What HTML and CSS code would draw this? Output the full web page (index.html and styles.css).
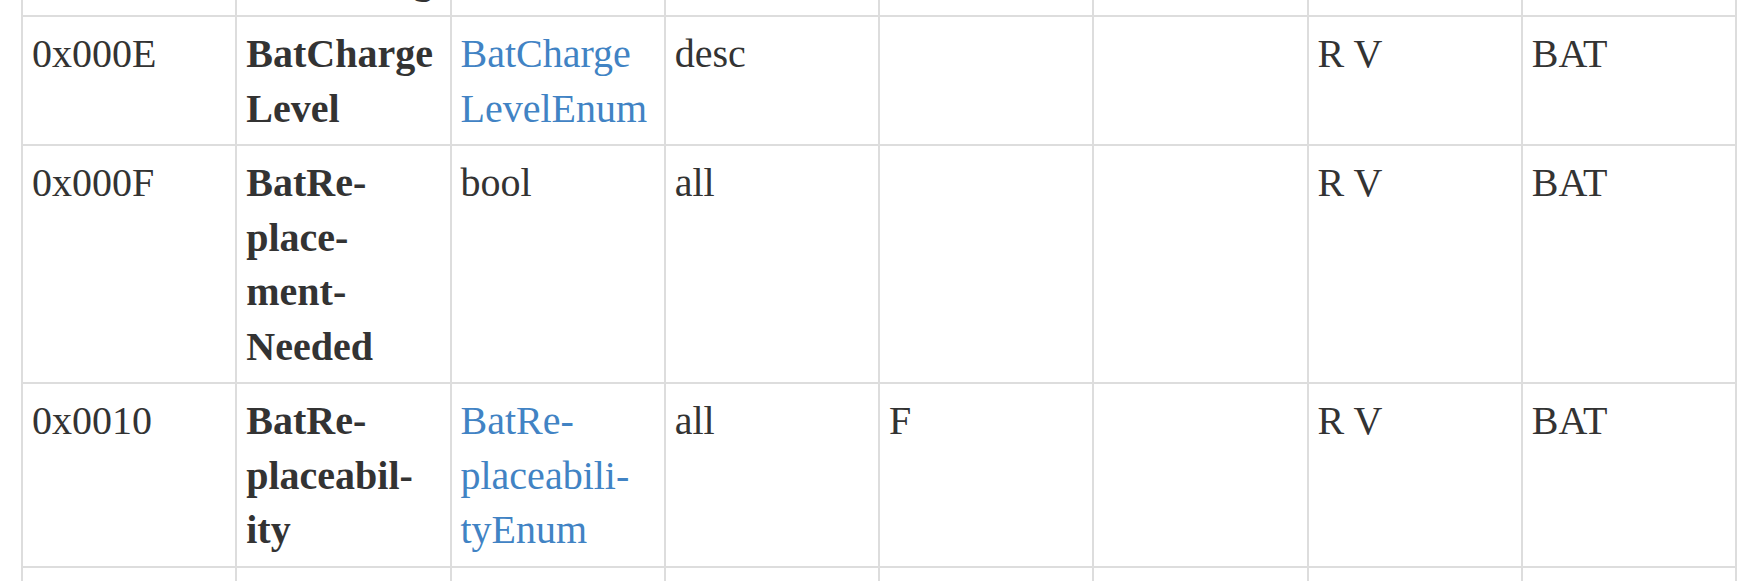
FILE: index.html
```html
<!DOCTYPE html>
<html lang="en">
<head>
<meta charset="utf-8">
<title>Power Source attributes</title>
<link rel="stylesheet" href="styles.css">
</head>
<body>
<div class="page">
<table class="attrs">
<tbody>
<tr>
<td></td>
<td class="name"><br>Remaining</td>
<td></td>
<td></td>
<td></td>
<td></td>
<td></td>
<td></td>
</tr>
<tr>
<td>0x000E</td>
<td class="name">BatCharge Level</td>
<td><a href="#BatChargeLevelEnum">BatCharge<wbr>LevelEnum</a></td>
<td>desc</td>
<td></td>
<td></td>
<td>R V</td>
<td>BAT</td>
</tr>
<tr>
<td>0x000F</td>
<td class="name">BatRe-<br>place-<br>ment-<br>Needed</td>
<td>bool</td>
<td>all</td>
<td></td>
<td></td>
<td>R V</td>
<td>BAT</td>
</tr>
<tr>
<td>0x0010</td>
<td class="name">BatRe-<br>placeabil-<br>ity</td>
<td><a href="#BatReplaceabilityEnum">BatRe-<br>placeabili-<br>tyEnum</a></td>
<td>all</td>
<td>F</td>
<td></td>
<td>R V</td>
<td>BAT</td>
</tr>
<tr>
<td>&nbsp;</td>
<td></td>
<td></td>
<td></td>
<td></td>
<td></td>
<td></td>
<td></td>
</tr>
</tbody>
</table>
</div>
</body>
</html>
```

FILE: styles.css
```css
html, body {
  margin: 0;
  padding: 0;
  background: #ffffff;
}

body {
  font-family: "Liberation Serif", "DejaVu Serif", serif;
  font-size: 40px;
  line-height: 54.5px;
  color: #333333;
}

.page {
  padding: 0 20px 0 21px;
  height: 581px;
  overflow: hidden;
}

.attrs {
  width: 1716px;
  margin-top: -114px;
  border-collapse: collapse;
  table-layout: fixed;
}

.attrs td {
  border: 2px solid #dddddd;
  padding: 10px 9px 8px 9px;
  vertical-align: top;
  text-align: left;
  overflow-wrap: break-word;
}

.attrs td.name {
  font-weight: bold;
}

.attrs a {
  color: #4183c4;
  text-decoration: none;
}
```
